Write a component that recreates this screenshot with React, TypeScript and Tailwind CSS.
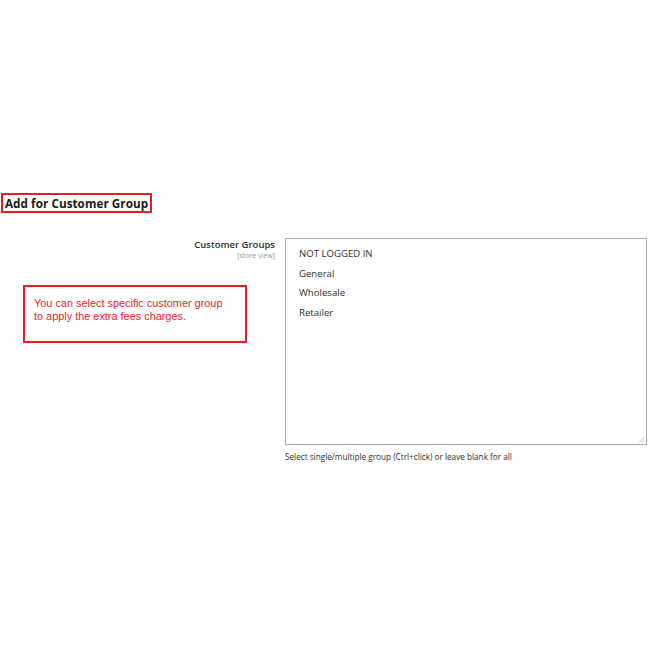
import React from "react";

export default function App() {
  const options = ["NOT LOGGED IN", "General", "Wholesale", "Retailer"];
  return (
    <div
      className="w-[670px] h-[670px] bg-white text-[#303030]"
      style={{ fontFamily: '"Open Sans", sans-serif' }}
    >
      <div className="flex pt-[193px] pl-[1px]">
        <div className="border-2 border-[#e31e24] px-[2px] text-[11.7px] leading-[16px] font-bold text-[#1a1a1a] tracking-[0.05px]">
          Add for Customer Group
        </div>
      </div>
      <div className="flex mt-[25px]">
        <div className="w-[285px] shrink-0">
          <div className="pr-[10px] text-right">
            <div className="text-[9.5px] leading-[14px] font-semibold text-[#303030]">Customer Groups</div>
            <div className="text-[7px] leading-[7px] text-[#999]">[store view]</div>
          </div>
          <div className="ml-[23px] mt-[26px] w-[224px] h-[58px] border-2 border-[#e31e24] pl-[9px] pt-[10px] text-[10.9px] leading-[13px] text-[#e8232a]"
            style={{ fontFamily: '"Liberation Sans", Arial, sans-serif' }}>
            You can select specific customer group
            <br />
            to apply the extra fees charges.
          </div>
        </div>
        <div className="flex flex-col">
          <div className="relative w-[362px] h-[207px] border border-[#adadad] pt-[5px] pl-[13px]">
            {options.map((o) => (
              <div key={o} className="text-[9.6px] leading-[19.7px] text-[#303030]">
                {o}
              </div>
            ))}
            <svg className="absolute right-[1px] bottom-[1px]" width="7" height="7" viewBox="0 0 7 7">
              <line x1="6.5" y1="1" x2="1" y2="6.5" stroke="#b0b0b0" strokeWidth="0.8" />
              <line x1="6.5" y1="4" x2="4" y2="6.5" stroke="#b0b0b0" strokeWidth="0.8" />
            </svg>
          </div>
          <div className="mt-[6px] text-[8.2px] leading-[12px] text-[#303030]">
            Select single/multiple group (Ctrl+click) or leave blank for all
          </div>
        </div>
      </div>
    </div>
  );
}
